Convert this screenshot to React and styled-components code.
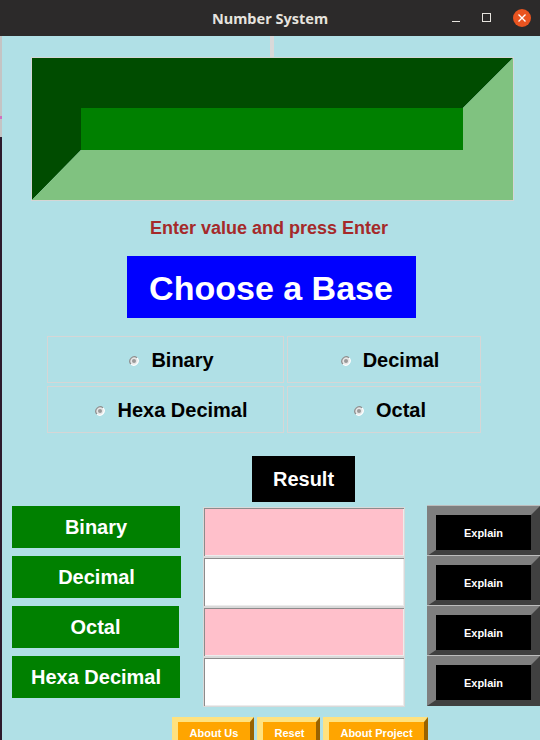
import React from "react";
import styled, { createGlobalStyle } from "styled-components";

const GlobalStyle = createGlobalStyle`
  html, body {
    margin: 0;
    padding: 0;
    width: 540px;
    height: 740px;
    overflow: hidden;
    background: #2c1a2c;
  }
  * {
    box-sizing: border-box;
  }
`;

const Frame = styled.div`
  width: 540px;
  height: 740px;
  display: flex;
  flex-direction: column;
  overflow: hidden;
  font-family: "Liberation Sans", Arial, sans-serif;
`;

const TitleBar = styled.div`
  height: 36px;
  flex: none;
  background: #2c2a2a;
  display: flex;
  align-items: center;
  justify-content: center;
  position: relative;
  color: #e6e3de;
  font-family: "Noto Sans", "DejaVu Sans", sans-serif;
  font-weight: bold;
  font-size: 14.5px;
`;

const WindowControls = styled.div`
  position: absolute;
  right: 9px;
  top: 9px;
  display: flex;
  align-items: center;
  gap: 14px;
`;

const Body = styled.div`
  flex: 1;
  display: flex;
`;

const DesktopStrip = styled.div`
  width: 2px;
  flex: none;
  background: linear-gradient(
    to bottom,
    #c4c4c4 0,
    #c4c4c4 80px,
    #d070c0 80px,
    #d070c0 83px,
    #c4c4c4 83px,
    #c4c4c4 101px,
    #2c1a2c 101px
  );
`;

const Content = styled.div`
  flex: 1;
  background: #b0e0e6;
  display: flex;
  flex-direction: column;
  align-items: flex-start;
`;

const TopTick = styled.div`
  width: 4px;
  height: 21px;
  margin-left: 268px;
  background: #d9d9d9;
`;

const Canvas = styled.div`
  width: 483px;
  height: 144px;
  margin-left: 29px;
  border: 1px solid #d6d6d6;
  display: flex;
`;

const Hint = styled.div`
  align-self: center;
  margin-top: 17px;
  margin-right: 4px;
  color: #a52a2a;
  font-weight: bold;
  font-size: 18px;
  line-height: 21px;
`;

const BaseTitle = styled.div`
  align-self: center;
  margin-top: 17px;
  width: 289px;
  height: 62px;
  padding-top: 2px;
  background: #0000ff;
  color: #ffffff;
  font-weight: bold;
  font-size: 34px;
  display: flex;
  align-items: center;
  justify-content: center;
`;

const RadioGrid = styled.div`
  margin-top: 18px;
  margin-left: 45px;
  display: grid;
  grid-template-columns: 237px 194px;
  grid-auto-rows: 47px;
  gap: 3px;
`;

const RadioCell = styled.label`
  border: 1px solid #d6d6d6;
  display: flex;
  align-items: center;
  justify-content: center;
  gap: 12px;
  padding-left: 12px;
  padding-top: 2px;
  font-weight: bold;
  font-size: 20px;
  color: #000;
`;

const ResultBox = styled.div`
  margin-top: 23px;
  margin-left: 250px;
  width: 103px;
  height: 46px;
  background: #000;
  color: #fff;
  font-weight: bold;
  font-size: 20px;
  display: flex;
  align-items: center;
  justify-content: center;
`;

const Rows = styled.div`
  margin-top: 4px;
  margin-left: 10px;
  display: grid;
  grid-template-columns: 169px 202px 113px;
  grid-auto-rows: 50px;
  column-gap: 22px;
`;

const BaseLabel = styled.div`
  width: ${(p) => p.$w}px;
  height: 42px;
  background: #008000;
  color: #fff;
  font-weight: bold;
  font-size: 20px;
  display: flex;
  align-items: center;
  justify-content: center;
`;

const ValueEntry = styled.div`
  margin-top: 1px;
  height: 50px;
  background: ${(p) => (p.$pink ? "#ffc0cb" : "#ffffff")};
  border: 1px solid #d9d9d9;
  box-shadow: inset 1px 1px 0 #8c8c8c, inset -1px -1px 0 #ececec;
`;

const ExplainButton = styled.div`
  height: 50px;
  background: #000;
  border-style: solid;
  border-width: 9px 9px 6px 9px;
  border-color: #7f7f7f #404040 #404040 #7f7f7f;
  box-shadow: 0 -1px 0 #bdbdbd;
  color: #fff;
  font-weight: bold;
  font-size: 11px;
  display: flex;
  align-items: center;
  justify-content: center;
`;

const Footer = styled.div`
  margin-top: 11px;
  margin-left: 170px;
  display: flex;
  gap: 3px;
`;

const FooterButton = styled.div`
  width: ${(p) => p.$w}px;
  height: 30px;
  background: #ffa500;
  border-style: solid;
  border-width: 5px 4px 4px 6px;
  border-color: #ffe27f #996300 #996300 #ffe27f;
  color: #fff;
  font-weight: bold;
  font-size: 11px;
  display: flex;
  justify-content: center;
  padding-top: 5px;
`;

const RadioDot = () => (
  <svg width="10" height="10" viewBox="0 0 10 10">
    <circle cx="5" cy="5" r="4.2" fill="#e6e6e6" />
    <path d="M1.9 8.1 A4.4 4.4 0 0 1 8.1 1.9" fill="none" stroke="#8e8e8e" strokeWidth="1.2" />
    <path d="M8.1 1.9 A4.4 4.4 0 0 1 1.9 8.1" fill="none" stroke="#ffffff" strokeWidth="1.2" />
    <circle cx="5" cy="5" r="2" fill="#9a9a9a" />
  </svg>
);

const BevelArt = () => (
  <svg width="481" height="142" viewBox="0 0 481 142">
    <polygon points="0,0 481,0 431,50 49,50 49,92 0,142" fill="#004c00" />
    <polygon points="481,0 481,142 0,142 49,92 431,92 431,50" fill="#80c280" />
    <rect x="49" y="50" width="382" height="42" fill="#008000" />
  </svg>
);

const bases = ["Binary", "Decimal", "Hexa Decimal", "Octal"];

const rows = [
  { name: "Binary", w: 168, pink: true },
  { name: "Decimal", w: 169, pink: false },
  { name: "Octal", w: 167, pink: true },
  { name: "Hexa Decimal", w: 168, pink: false },
];

const footer = [
  { label: "About Us", w: 82 },
  { label: "Reset", w: 63 },
  { label: "About Project", w: 105 },
];

export default function App() {
  return (
    <Frame>
      <GlobalStyle />
      <TitleBar>
        Number System
        <WindowControls>
          <svg width="10" height="10" viewBox="0 0 10 10">
            <line x1="1" y1="8.5" x2="9" y2="8.5" stroke="#e6e3de" strokeWidth="1" />
          </svg>
          <svg width="24" height="12" viewBox="0 0 24 12">
            <rect x="7.5" y="1.5" width="8" height="8" fill="none" stroke="#e6e3de" strokeWidth="1" />
          </svg>
          <svg width="18" height="18" viewBox="0 0 18 18">
            <circle cx="9" cy="9" r="9" fill="#e95420" />
            <path d="M5.5 5.5 L12.5 12.5 M12.5 5.5 L5.5 12.5" stroke="#fff" strokeWidth="1.4" />
          </svg>
        </WindowControls>
      </TitleBar>
      <Body>
        <DesktopStrip />
        <Content>
          <TopTick />
          <Canvas>
            <BevelArt />
          </Canvas>
          <Hint>Enter value and press Enter</Hint>
          <BaseTitle>Choose a Base</BaseTitle>
          <RadioGrid>
            {bases.map((b) => (
              <RadioCell key={b}>
                <RadioDot />
                {b}
              </RadioCell>
            ))}
          </RadioGrid>
          <ResultBox>Result</ResultBox>
          <Rows>
            {rows.map((r) => (
              <React.Fragment key={r.name}>
                <BaseLabel $w={r.w}>{r.name}</BaseLabel>
                <ValueEntry $pink={r.pink} />
                <ExplainButton>Explain</ExplainButton>
              </React.Fragment>
            ))}
          </Rows>
          <Footer>
            {footer.map((f) => (
              <FooterButton key={f.label} $w={f.w}>
                {f.label}
              </FooterButton>
            ))}
          </Footer>
        </Content>
      </Body>
    </Frame>
  );
}
